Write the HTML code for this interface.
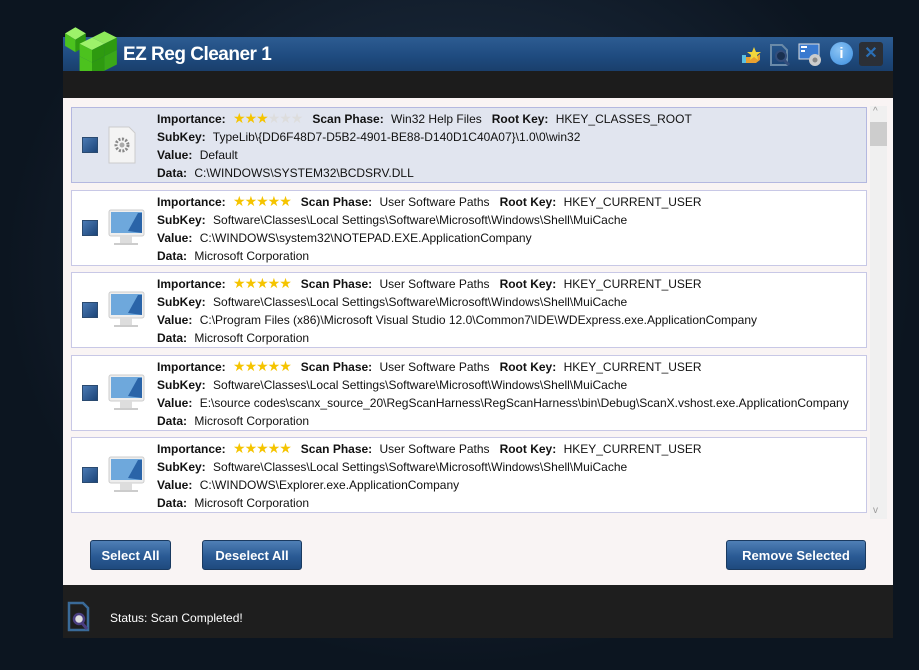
<!DOCTYPE html>
<html><head><style>
*{margin:0;padding:0;box-sizing:border-box}
body{width:919px;height:670px;overflow:hidden;background:radial-gradient(ellipse at 50% 40%,#22344a,#0c1520 70%);font-family:"Liberation Sans",sans-serif;position:relative}
.abs{position:absolute}
#title{left:63px;top:37px;width:830px;height:34px;background:linear-gradient(#2d5c92,#1e4a7e 60%,#1a3f6c)}
#dark{left:63px;top:71px;width:830px;height:27px;background:#1c1c1c}
#content{left:63px;top:98px;width:830px;height:487px;background:#f9f4f4}
#status{left:63px;top:585px;width:830px;height:53px;background:#1e1e1e}
.item{position:absolute;left:71px;width:796px;height:76px;background:#fff;border:1px solid #c8c8e6}
.item.sel{background:#e1e5ef;border-color:#b4b8e0}
.cb{position:absolute;left:10px;top:29px;width:16px;height:16px;background:linear-gradient(135deg,#4a7ab4,#1c4478);border:1px solid #2a4a70}
.txt{position:absolute;left:85px;top:2px;font-size:12px;color:#111;line-height:18px;white-space:nowrap}
.txt b{font-weight:bold;margin-right:4px}
.gap{display:inline-block;width:10px}
.stars{display:inline-block;color:#f5c400;font-size:14px;line-height:12px;letter-spacing:-1px;margin-right:10px}
.stars i{color:#ddd;font-style:normal}
.btn{position:absolute;top:540px;height:30px;border-radius:3px;background:linear-gradient(#4f7fb5,#2a5a94 55%,#1f4a7e);color:#fff;font-weight:bold;font-size:13px;text-align:center;line-height:30px;border:1px solid #1a3a60}
</style></head><body>
<div id="title" class="abs"></div>
<svg class="abs" style="left:63px;top:20px" width="58" height="60" viewBox="0 0 56 56">
<polygon points="2,12 12,6 22,12 12,18" fill="#9df26a"/><polygon points="2,12 12,18 12,30 2,24" fill="#4cc21e"/><polygon points="12,18 22,12 22,24 12,30" fill="#2e9a10"/>
<polygon points="16,22 28,16 40,22 28,28" fill="#9df26a"/><polygon points="16,22 28,28 28,40 16,34" fill="#4cc21e"/><polygon points="28,28 40,22 40,34 28,40" fill="#2e9a10"/>
<polygon points="28,16 40,10 52,16 40,22" fill="#8ee85a"/><polygon points="40,22 52,16 52,28 40,34" fill="#2e9a10"/>
<polygon points="16,34 28,40 28,54 16,48" fill="#4cc21e"/><polygon points="28,40 40,34 40,48 28,54" fill="#2e9a10"/><polygon points="40,34 52,28 52,42 40,48" fill="#3aa818"/>
</svg>
<div class="abs" style="left:123px;top:44px;color:#fff;font-weight:bold;font-size:19px;letter-spacing:-0.5px">EZ Reg Cleaner 1</div>
<div class="abs" style="left:742px;top:46px;width:20px;height:18px;"><svg width="20" height="18"><rect x="0" y="9" width="4" height="8" fill="#5bc0e0"/><path d="M4 11 h10 l4 -3 v6 l-4 3 h-10z" fill="#e8a030"/><polygon points="12,1 14,6 19,6 15,9 16,14 12,11 8,14 9,9 5,6 10,6" fill="#f2d63c"/></svg></div>
<svg class="abs" style="left:768px;top:43px" width="24" height="24"><path d="M3 2 h11 l5 5 v15 h-16z" fill="none" stroke="#6a8aa8" stroke-width="2"/><circle cx="13" cy="13" r="5" fill="#1a3050" stroke="#344e7c" stroke-width="2"/><line x1="16" y1="17" x2="21" y2="22" stroke="#344e7c" stroke-width="3"/></svg>
<svg class="abs" style="left:798px;top:42px" width="26" height="26"><rect x="1" y="2" width="20" height="15" fill="#3a7ad0" stroke="#ddd"/><rect x="3" y="4" width="6" height="2" fill="#fff"/><rect x="3" y="8" width="4" height="2" fill="#fff"/><circle cx="17" cy="18" r="6" fill="#ccc"/><circle cx="17" cy="18" r="2.5" fill="#888"/></svg>
<div class="abs" style="left:830px;top:42px;width:23px;height:23px;border-radius:50%;background:radial-gradient(circle at 40% 35%,#8cc4f4,#3b8ee0);color:#fff;font-weight:bold;font-size:15px;text-align:center;line-height:23px">i</div>
<div class="abs" style="left:859px;top:42px;width:24px;height:24px;border-radius:3px;background:#2b2f36;color:#2a6fb6;font-weight:bold;font-size:16px;text-align:center;line-height:23px">✕</div>
<div id="dark" class="abs"></div>
<div id="content" class="abs"></div>

<div class="abs" style="left:870px;top:106px;width:17px;height:413px;background:#f0f0f0"></div>
<div class="abs" style="left:870px;top:122px;width:17px;height:24px;background:#cdcdcd"></div>
<div class="abs" style="left:873px;top:106px;font-size:10px;color:#999">^</div>
<div class="abs" style="left:873px;top:505px;font-size:10px;color:#999">v</div>

<div class="item sel" style="top:107px"><div class="cb"></div>
<svg class="abs" style="left:36px;top:18px" width="28" height="38"><path d="M1 1h20l6 6v30h-26z" fill="#f4f4f4" stroke="#ccc"/><circle cx="14" cy="19" r="6" fill="none" stroke="#888" stroke-width="3" stroke-dasharray="2 1.5"/><circle cx="14" cy="19" r="2.5" fill="#aaa"/></svg>
<div class="txt"><b>Importance:</b> <span class="stars">★★★<i>★★★</i></span><b>Scan Phase:</b> Win32 Help Files<span class="gap"></span><b>Root Key:</b> HKEY_CLASSES_ROOT<br><b>SubKey:</b> TypeLib\{DD6F48D7-D5B2-4901-BE88-D140D1C40A07}\1.0\0\win32<br><b>Value:</b> Default<br><b>Data:</b> C:\WINDOWS\SYSTEM32\BCDSRV.DLL</div></div>

<div class="item" style="top:190px"><div class="cb"></div><svg class="abs" style="left:36px;top:18px" width="38" height="38"><rect x="1" y="1" width="35" height="26" rx="2" fill="#eee" stroke="#ccc"/><rect x="3" y="3" width="31" height="21" fill="#6ea8dc"/><path d="M20 22 L30 4 L34 4 L34 24z" fill="#2a64a8"/><rect x="12" y="27" width="12" height="7" fill="#ddd"/><rect x="6" y="34" width="24" height="2" fill="#ccc"/></svg>
<div class="txt"><b>Importance:</b> <span class="stars">★★★★★</span><b>Scan Phase:</b> User Software Paths<span class="gap"></span><b>Root Key:</b> HKEY_CURRENT_USER<br><b>SubKey:</b> Software\Classes\Local Settings\Software\Microsoft\Windows\Shell\MuiCache<br><b>Value:</b> C:\WINDOWS\system32\NOTEPAD.EXE.ApplicationCompany<br><b>Data:</b> Microsoft Corporation</div></div>

<div class="item" style="top:272px"><div class="cb"></div><svg class="abs" style="left:36px;top:18px" width="38" height="38"><rect x="1" y="1" width="35" height="26" rx="2" fill="#eee" stroke="#ccc"/><rect x="3" y="3" width="31" height="21" fill="#6ea8dc"/><path d="M20 22 L30 4 L34 4 L34 24z" fill="#2a64a8"/><rect x="12" y="27" width="12" height="7" fill="#ddd"/><rect x="6" y="34" width="24" height="2" fill="#ccc"/></svg>
<div class="txt"><b>Importance:</b> <span class="stars">★★★★★</span><b>Scan Phase:</b> User Software Paths<span class="gap"></span><b>Root Key:</b> HKEY_CURRENT_USER<br><b>SubKey:</b> Software\Classes\Local Settings\Software\Microsoft\Windows\Shell\MuiCache<br><b>Value:</b> C:\Program Files (x86)\Microsoft Visual Studio 12.0\Common7\IDE\WDExpress.exe.ApplicationCompany<br><b>Data:</b> Microsoft Corporation</div></div>

<div class="item" style="top:355px"><div class="cb"></div><svg class="abs" style="left:36px;top:18px" width="38" height="38"><rect x="1" y="1" width="35" height="26" rx="2" fill="#eee" stroke="#ccc"/><rect x="3" y="3" width="31" height="21" fill="#6ea8dc"/><path d="M20 22 L30 4 L34 4 L34 24z" fill="#2a64a8"/><rect x="12" y="27" width="12" height="7" fill="#ddd"/><rect x="6" y="34" width="24" height="2" fill="#ccc"/></svg>
<div class="txt"><b>Importance:</b> <span class="stars">★★★★★</span><b>Scan Phase:</b> User Software Paths<span class="gap"></span><b>Root Key:</b> HKEY_CURRENT_USER<br><b>SubKey:</b> Software\Classes\Local Settings\Software\Microsoft\Windows\Shell\MuiCache<br><b>Value:</b> E:\source codes\scanx_source_20\RegScanHarness\RegScanHarness\bin\Debug\ScanX.vshost.exe.ApplicationCompany<br><b>Data:</b> Microsoft Corporation</div></div>

<div class="item" style="top:437px"><div class="cb"></div><svg class="abs" style="left:36px;top:18px" width="38" height="38"><rect x="1" y="1" width="35" height="26" rx="2" fill="#eee" stroke="#ccc"/><rect x="3" y="3" width="31" height="21" fill="#6ea8dc"/><path d="M20 22 L30 4 L34 4 L34 24z" fill="#2a64a8"/><rect x="12" y="27" width="12" height="7" fill="#ddd"/><rect x="6" y="34" width="24" height="2" fill="#ccc"/></svg>
<div class="txt"><b>Importance:</b> <span class="stars">★★★★★</span><b>Scan Phase:</b> User Software Paths<span class="gap"></span><b>Root Key:</b> HKEY_CURRENT_USER<br><b>SubKey:</b> Software\Classes\Local Settings\Software\Microsoft\Windows\Shell\MuiCache<br><b>Value:</b> C:\WINDOWS\Explorer.exe.ApplicationCompany<br><b>Data:</b> Microsoft Corporation</div></div>

<div class="btn" style="left:90px;width:81px">Select All</div>
<div class="btn" style="left:202px;width:100px">Deselect All</div>
<div class="btn" style="left:726px;width:140px">Remove Selected</div>

<div id="status" class="abs"></div>
<svg class="abs" style="left:67px;top:601px" width="24" height="32"><path d="M2 2h14l5 5v22h-19z" fill="none" stroke="#3a6a98" stroke-width="2.5"/><circle cx="12" cy="18" r="5" fill="#ddd" stroke="#4a3e80" stroke-width="2.5"/><line x1="15" y1="22" x2="20" y2="28" stroke="#4a3e80" stroke-width="3"/></svg>
<div class="abs" style="left:110px;top:611px;color:#fff;font-size:12px">Status: Scan Completed!</div>
</body></html>
